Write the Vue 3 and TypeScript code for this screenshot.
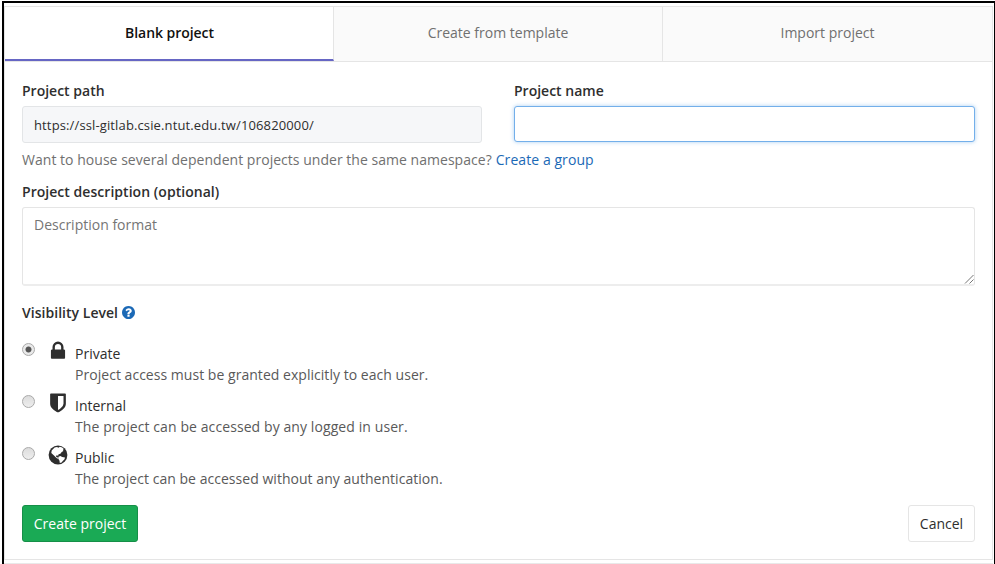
<script setup lang="ts">
import { ref } from 'vue'

interface Tab { id: string; label: string }
interface Level { id: string; label: string; text: string }

const tabs: Tab[] = [
  { id: 'blank', label: 'Blank project' },
  { id: 'template', label: 'Create from template' },
  { id: 'import', label: 'Import project' },
]
const levels: Level[] = [
  { id: 'private', label: 'Private', text: 'Project access must be granted explicitly to each user.' },
  { id: 'internal', label: 'Internal', text: 'The project can be accessed by any logged in user.' },
  { id: 'public', label: 'Public', text: 'The project can be accessed without any authentication.' },
]
const activeTab = ref('blank')
const visibility = ref('private')
const projectName = ref('')
const description = ref('')
</script>

<template>
  <div class="frame">
    <main class="card">
      <nav class="tabs">
        <button
          v-for="tab in tabs"
          :key="tab.id"
          type="button"
          class="tab"
          :class="{ active: activeTab === tab.id }"
          @click="activeTab = tab.id"
        >{{ tab.label }}</button>
      </nav>
      <form class="form" @submit.prevent>
        <div class="row">
          <div class="field path">
            <label>Project path</label>
            <div class="control readonly">https://ssl-gitlab.csie.ntut.edu.tw/106820000/</div>
          </div>
          <div class="field name">
            <label for="name">Project name</label>
            <input id="name" v-model="projectName" class="control focused" type="text">
          </div>
        </div>
        <p class="hint"><span>Want to house several dependent projects under the same namespace?</span><a href="#">Create a group</a></p>
        <label class="desc-label" for="desc">Project description (optional)</label>
        <div class="area-wrap">
          <textarea id="desc" v-model="description" placeholder="Description format"></textarea>
          <svg class="grip" viewBox="0 0 10 10"><path d="M1 9.5 9.5 1M5.5 9.5l4-4" /></svg>
        </div>
        <div class="vis-title">
          <span>Visibility Level</span>
          <svg class="help" viewBox="128 128 1536 1536"><path d="M1024 1376v-192q0-14-9-23t-23-9h-192q-14 0-23 9t-9 23v192q0 14 9 23t23 9h192q14 0 23-9t9-23zm256-672q0-88-55.5-163t-138.5-116-170-41q-243 0-371 213-15 24 8 42l132 100q7 6 19 6 16 0 25-12 53-68 86-92 34-24 86-24 48 0 85.5 26t37.5 59q0 38-20 61t-68 45q-63 28-115.5 86.5t-52.5 125.5v36q0 14 9 23t23 9h192q14 0 23-9t9-23q0-19 21.5-49.5t54.5-49.5q32-18 49-28.5t46-35 44.5-48 28-60.5 12.5-81zm384 192q0 209-103 385.5t-279.5 279.5-385.5 103-385.5-103-279.5-279.5-103-385.5 103-385.5 279.5-279.5 385.5-103 385.5 103 279.5 279.5 103 385.5z" /></svg>
        </div>
        <div class="levels">
          <label v-for="level in levels" :key="level.id" class="level" :class="level.id">
            <input v-model="visibility" class="radio" type="radio" name="visibility" :value="level.id">
            <svg v-if="level.id === 'private'" class="icon" viewBox="0 0 1792 1792"><path d="M640 768h512v-192q0-106-75-181t-181-75-181 75-75 181v192zm832 96v576q0 40-28 68t-68 28h-960q-40 0-68-28t-28-68v-576q0-40 28-68t68-28h32v-192q0-184 132-316t316-132 316 132 132 316v192h32q40 0 68 28t28 68z" /></svg>
            <svg v-else-if="level.id === 'internal'" class="icon" viewBox="0 0 1792 1792"><path d="M1344 960v-640h-448v1137q119-63 213-137 235-184 235-360zm192-768v768q0 86-33.5 170.5t-83 150-118 127.5-126.5 103-121 77.5-89.5 49.5-42.5 20q-12 6-26 6t-26-6q-16-7-42.5-20t-89.5-49.5-121-77.5-126.5-103-118-127.5-83-150-33.5-170.5v-768q0-26 19-45t45-19h1152q26 0 45 19t19 45z" /></svg>
            <svg v-else class="icon" viewBox="0 0 22 22">
              <circle cx="11" cy="11" r="9.4" />
              <path class="land" d="M7.6 3.6 10 3l1.4.7 1.4-1 2.4.9 1.6 1.5-.9.9.5 1.1-1.7.9-1.3 1.7-1.8.6-.5 1.5-1.4-.5-.8 1 .8 1 1.2.1.5 1.5-1.9-.9-2.5-2.4L4.3 9l.4-2.5z" />
              <path class="land" d="m11.4 12.7 2-.7 1.8.9 2.8.6-.5 1.8-1.5 1.5-1.4 1.6-1.8.6-.3-2.3-1.2-2z" />
            </svg>
            <span class="copy">
              <span class="level-name">{{ level.label }}</span>
              <span class="level-text">{{ level.text }}</span>
            </span>
          </label>
        </div>
        <div class="actions">
          <button class="btn create" type="submit">Create project</button>
          <button class="btn cancel" type="button">Cancel</button>
        </div>
      </form>
    </main>
  </div>
</template>

<style>
body { margin: 0; background: #fff; overflow: hidden; }
</style>

<style scoped>
* { box-sizing: border-box; }
.frame {
  height: 563px;
  margin: 1px 0 0 2px;
  padding: 3px 1px 0 0;
  border: solid #000;
  border-width: 2px 1px 0 2px;
  font: 14px/20px "Open Sans", "Noto Sans", sans-serif;
  color: #2e2e2e;
  overflow: hidden;
}
.card { height: 554px; border: 1px solid #e5e5e5; box-shadow: 0 3px 0 #fff, 0 4px 0 #e9e9e9; }
.tabs { display: grid; grid-template-columns: 329px 329px 1fr; height: 55px; border-bottom: 1px solid #e5e5e5; }
.tab {
  height: 54px;
  padding: 0 0 2px;
  border: 0;
  border-right: 1px solid #e5e5e5;
  background: #fafafa;
  color: #707070;
  font: inherit;
}
.tab:last-child { border-right: 0; }
.tab.active { background: #fff; color: #111; font-weight: 600; padding: 0 0 0 1px; letter-spacing: -.06px; border-bottom: 2px solid #6666c4; }
.form { padding: 19px 17px 0; }
.row { display: flex; justify-content: space-between; }
.path { width: 460px; }
.name { width: 461px; }
label { display: block; }
.field label, .desc-label, .vis-title { font-weight: 600; height: 20px; white-space: nowrap; }
.desc-label { letter-spacing: .04px; }
.control {
  display: flex;
  align-items: center;
  width: 100%;
  height: 37px;
  margin-top: 5px;
  padding: 0 11px;
  border: 1px solid #e3e5e7;
  border-radius: 3px;
  font: inherit;
  outline: 0;
}
.readonly { padding-top: 1px; background: #f6f7f9; font-size: 13px; letter-spacing: .13px; }
.focused { height: 36px; border-color: #73afea; background: #fff; box-shadow: 0 0 4px rgba(115, 175, 234, .6); }
.hint { display: flex; gap: 4px; height: 20px; margin: 7px 0 12px; color: #707070; letter-spacing: .03px; white-space: nowrap; }
.hint a { color: #1b69b6; letter-spacing: .07px; text-decoration: none; }
.area-wrap { position: relative; height: 79px; margin-top: 5px; }
textarea {
  display: block;
  width: 100%;
  height: 79px;
  padding: 7px 11px;
  border: 1px solid #e5e5e5;
  border-bottom: 2px solid #ededed;
  border-radius: 3px;
  background: #fff;
  font: inherit;
  resize: none;
  outline: 0;
}
textarea::placeholder { color: #757575; opacity: 1; }
.grip { position: absolute; right: 1px; bottom: 2px; width: 10px; height: 10px; fill: none; stroke: #777; stroke-width: 1; }
.vis-title { display: flex; align-items: center; gap: 4px; margin-top: 17px; letter-spacing: .03px; }
.help { width: 13px; height: 13px; margin-bottom: 1px; fill: #1b69b6; }
.levels { margin-top: 17px; }
.level { display: flex; height: 52px; align-items: flex-start; }
.radio {
  appearance: none;
  flex: none;
  width: 13px;
  height: 13px;
  margin: 3px 11.5px 0 0;
  border: 1px solid #a9a9a9;
  border-radius: 50%;
  background: linear-gradient(#dcdcdc, #eee);
}
.radio:checked { background: radial-gradient(circle, #555 0 2.6px, #e9e9e9 3.4px); }
.icon { flex: none; width: 22px; height: 22px; margin-right: 6.5px; fill: #2e2e2e; }
.land { fill: #fff; }
.copy { display: flex; flex-direction: column; padding-top: 4px; white-space: nowrap; }
.level-name { height: 21px; }
.level-text { color: #595959; letter-spacing: .035px; }
.internal .level-text { letter-spacing: .09px; }
.actions { display: flex; justify-content: space-between; margin-top: 9px; }
.btn { height: 37px; padding: 0; border: 1px solid #e5e5e5; border-radius: 3px; font: inherit; white-space: nowrap; }
.create { width: 116px; background: #1aaa55; border-color: #168f48; color: #fff; }
.cancel { width: 67px; background: #fff; color: #2e2e2e; }
</style>
